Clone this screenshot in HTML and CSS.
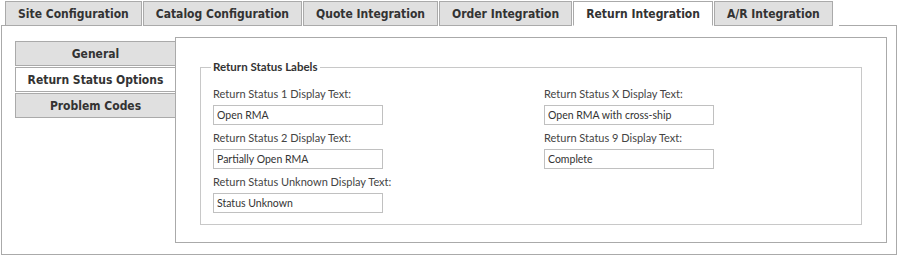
FILE: index.html
```html
<!DOCTYPE html>
<html>
<head>
	<title>Return Integration</title>
	<meta charset="utf-8">
	<link rel="stylesheet" href="styles.css">
</head>
<body>
	<section class="tabset">
		<div class="tabbar">
			<span class="lead"></span>
			<a class="tab">Site Configuration</a>
			<a class="tab">Catalog Configuration</a>
			<a class="tab">Quote Integration</a>
			<a class="tab">Order Integration</a>
			<a class="tab active">Return Integration</a>
			<a class="tab">A/R Integration</a>
			<span class="fill"></span>
		</div>

		<div class="panel">
			<div class="sidetabs">
				<a class="sidetab">General</a>
				<a class="sidetab active">Return Status Options</a>
				<a class="sidetab">Problem Codes</a>
			</div>

			<div class="sidepanel">
				<fieldset>
					<legend>Return Status Labels</legend>
					<div class="cols">
						<div class="col">
							<label for="rs1">Return Status 1 Display Text:</label>
							<input type="text" id="rs1" value="Open RMA">
							<label for="rs2">Return Status 2 Display Text:</label>
							<input type="text" id="rs2" value="Partially Open RMA">
							<label for="rsu">Return Status Unknown Display Text:</label>
							<input type="text" id="rsu" value="Status Unknown">
						</div>
						<div class="col">
							<label for="rsx">Return Status X Display Text:</label>
							<input type="text" id="rsx" value="Open RMA with cross-ship">
							<label for="rs9">Return Status 9 Display Text:</label>
							<input type="text" id="rs9" value="Complete">
						</div>
					</div>
				</fieldset>
			</div>
		</div>
	</section>
</body>
</html>
```

FILE: styles.css
```css
html, body {
	margin: 0;
	padding: 0;
	background-color: white;
}

body {
	font-family: Lato, "Open Sans", sans-serif;
	color: #333;
}

/* top tab strip */
.tabset {
	margin: 1px 2px 0 1px;
}

.tabbar {
	display: flex;
	align-items: stretch;
}

.tabbar .lead {
	width: 4px;
	border-bottom: 1px solid #aaa;
}

.tabbar .fill {
	flex: 1;
	margin-left: 5px;
	border-bottom: 1px solid #aaa;
}

.tab, .sidetab {
	font-family: "DejaVu Sans Condensed", "DejaVu Sans", sans-serif;
	font-stretch: condensed;
	font-weight: bold;
	font-size: 12px;
	color: #333;
	cursor: pointer;
	white-space: nowrap;
}

.tab {
	height: 23px;
	line-height: 24px;
	padding: 0 12px;
	margin-right: 1px;
	border: 1px solid #aaa;
	background-color: #e0e0e0;
}
.tab.active {
	background-color: white;
	border-bottom-color: white;
}

/* outer panel */
.panel {
	display: flex;
	padding: 11px 9px 11px 13px;
	border: 1px solid #aaa;
	border-top: none;
}

/* vertical tabs on the left */
.sidetabs {
	flex: none;
	display: flex;
	flex-direction: column;
	width: 160px;
	margin-top: 4px;
}

.sidetab {
	display: block;
	height: 23px;
	line-height: 24px;
	margin-bottom: 1px;
	text-align: center;
	border: 1px solid #aaa;
	border-right: none;
	background-color: #e0e0e0;
}
.sidetab.active {
	background-color: white;
}

.sidepanel {
	flex: 1;
	min-width: 0;
	padding: 22px 24px 17px 24px;
	border: 1px solid #aaa;
}

fieldset {
	min-width: 0;
	margin: 0;
	padding: 12px 12px 11px 12px;
	border: 1px solid #c8c8c8;
}

legend {
	margin-left: -2px;
	padding: 0 2px;
	font-size: 11.5px;
	font-weight: bold;
	line-height: 14px;
	color: #333;
}

.cols {
	display: flex;
}

.col {
	display: flex;
	flex-direction: column;
	align-items: flex-start;
	width: 331px;
}
.col + .col {
	width: auto;
	flex: 1;
}

.col label {
	font-size: 11px;
	line-height: 16px;
	color: #444;
	margin-bottom: 3px;
}

.col input {
	box-sizing: border-box;
	width: 170px;
	height: 20px;
	margin: 0 0 5px 0;
	padding: 0 3px;
	border: 1px solid #c0c0c0;
	font-family: Lato, "Open Sans", sans-serif;
	font-size: 10.5px;
	color: #333;
}
.col input:last-child {
	margin-bottom: 0;
}
```
